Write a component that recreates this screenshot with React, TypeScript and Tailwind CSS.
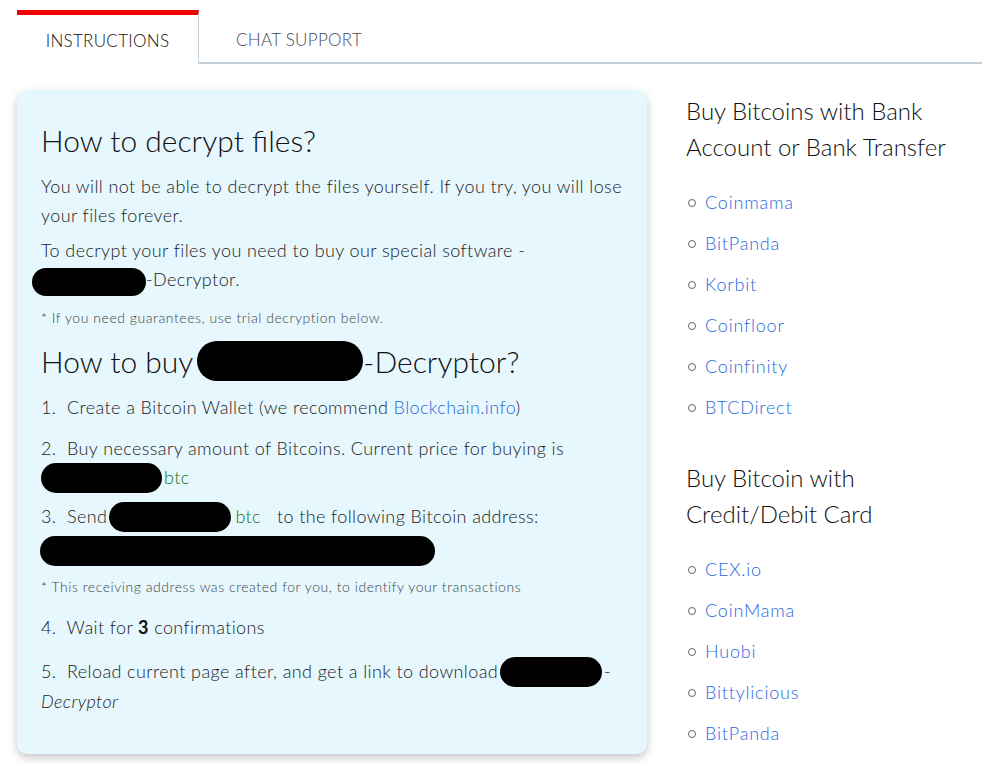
const BANK = ["Coinmama", "BitPanda", "Korbit", "Coinfloor", "Coinfinity", "BTCDirect"];
const CARD = ["CEX.io", "CoinMama", "Huobi", "Bittylicious", "BitPanda"];

const Redacted = ({ w, h = "h-[30px]", className = "" }: { w: string; h?: string; className?: string }) => (
  <span className={`inline-block ${w} ${h} rounded-full bg-black align-middle ${className}`} />
);

const Btc = () => <span className="text-[#177317]">btc</span>;

const LinkList = ({ items }: { items: string[] }) => (
  <ul className="mt-[17px]">
    {items.map((name) => (
      <li key={name} className="flex h-[41px] items-center">
        <span className="ml-[2px] mr-[9px] h-[8px] w-[8px] rounded-full border border-[#666]" />
        <a href="#" className="text-[18px] tracking-[0.8px] text-[#2a68e0]">
          {name}
        </a>
      </li>
    ))}
  </ul>
);

export default function App() {
  return (
    <div className="min-h-screen bg-white pl-[17px] pr-[18px] pt-[10px] font-['Lato',sans-serif] font-light text-[#222]">
      {/* Tabs */}
      <div className="flex h-[54px]">
        <div className="flex w-[182px] items-center justify-center border-r border-t-[5px] border-r-[#c3cfdb] border-t-[#f00000] pt-[3px] text-[17px] tracking-[0.3px] text-[#111]">
          INSTRUCTIONS
        </div>
        <div className="flex flex-1 items-center border-b-2 border-[#c3cfdb] pl-[37px] pt-[8px] text-[17px] tracking-[0.3px] text-[#3f4756]">
          CHAT SUPPORT
        </div>
      </div>

      <div className="mt-[26px] flex gap-[39px]">
        {/* Instructions card */}
        <div className="w-[630px] shrink-0 rounded-[10px] bg-[#e6f7fe] px-[24px] pb-[27px] pt-[30px] tracking-[0.4px] shadow-[0_4px_10px_rgba(0,0,0,0.22)]">
          <h1 className="text-[30px] leading-[40px] tracking-normal text-[#111]">How to decrypt files?</h1>
          <p className="mt-[12px] text-[18px] leading-[29px]">
            You will not be able to decrypt the files yourself. If you try, you will lose
            <br />
            your files forever.
          </p>
          <p className="mt-[6px] text-[18px] leading-[29px]">
            To decrypt your files you need to buy our special software -
            <br />
            <Redacted w="w-[114px]" h="h-[28px]" className="-ml-[9px]" />
            -Decryptor.
          </p>
          <p className="mt-[12px] text-[14px] leading-[20px] tracking-[0.55px] text-[#444]">
            * If you need guarantees, use trial decryption below.
          </p>
          <h2 className="mt-[13px] flex items-center text-[30px] leading-[40px] tracking-normal text-[#111]">
            How to buy
            <Redacted w="w-[166px]" h="h-[40px]" className="ml-[4px]" />
            -Decryptor?
          </h2>

          <div className="mt-[12px] text-[18px] leading-[29px]">
            1.&nbsp; Create a Bitcoin Wallet (we recommend{" "}
            <a href="#" className="text-[#2a68e0]">
              Blockchain.info
            </a>
            )
          </div>
          <div className="mt-[12px] text-[18px] leading-[29px]">
            2.&nbsp; Buy necessary amount of Bitcoins. Current price for buying is
            <br />
            <span className="flex items-center">
              <Redacted w="w-[121px]" />
              <span className="ml-[2px]">
                <Btc />
              </span>
            </span>
          </div>
          <div className="mt-[9px] text-[18px] leading-[29px]">
            <div className="flex items-center">
              3.&nbsp; Send
              <Redacted w="w-[122px]" className="ml-[2px] mr-[4px]" />
              <Btc />
              &nbsp;&nbsp; to the following Bitcoin address:
            </div>
            <Redacted w="w-[395px]" className="-ml-[1px] mt-[4px] block" />
          </div>
          <p className="mt-[11px] text-[14px] leading-[20px] tracking-[0.55px] text-[#444]">
            * This receiving address was created for you, to identify your transactions
          </p>
          <div className="mt-[16px] text-[18px] leading-[29px]">
            4.&nbsp; Wait for <b className="font-bold text-[#111]">3</b> confirmations
          </div>
          <div className="mt-[15px] text-[18px] leading-[29px]">
            <div className="flex items-center">
              5.&nbsp; Reload current page after, and get a link to download
              <Redacted w="w-[102px]" className="ml-[2px] mr-[2px]" />-
            </div>
            <i>Decryptor</i>
          </div>
        </div>

        {/* Where to buy */}
        <div className="flex-1 pt-[3px]">
          <h3 className="text-[24px] leading-[36px] text-[#111]">
            Buy Bitcoins with Bank
            <br />
            Account or Bank Transfer
          </h3>
          <LinkList items={BANK} />
          <h3 className="mt-[32px] text-[24px] leading-[36px] text-[#111]">
            Buy Bitcoin with
            <br />
            Credit/Debit Card
          </h3>
          <LinkList items={CARD} />
        </div>
      </div>
    </div>
  );
}
